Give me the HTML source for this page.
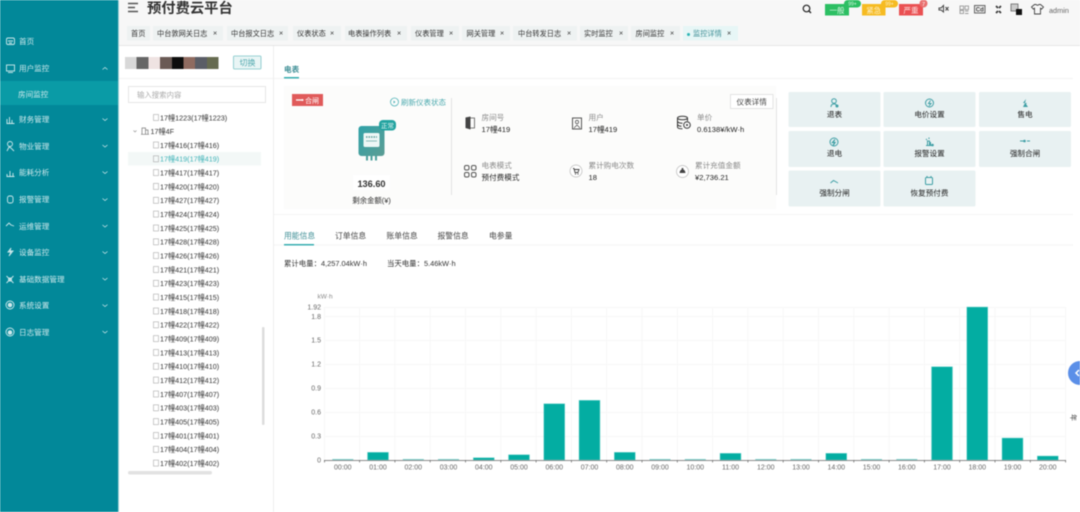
<!DOCTYPE html>
<html lang="zh-CN"><head><meta charset="utf-8"><title>预付费云平台</title>
<style>
html,body{margin:0;padding:0;width:1080px;height:512px;overflow:hidden;background:#fff}
svg{display:block;filter:blur(.4px)}
text{font-family:"Liberation Sans","Noto Sans CJK SC",sans-serif;font-size:7.2px;fill:#333}
.side text{fill:#cfe9ec;font-size:7.6px}
.tab{fill:#55757a;font-size:7.4px}
.x{fill:#889;font-size:6px}
.tree text{fill:#333;font-size:7.2px}
.tico{fill:none;stroke:#aaa;stroke-width:.6}
.lab{fill:#8a8a8a;font-size:7.6px}
.val{fill:#222;font-size:7.6px}
.act{fill:#222;font-size:7.6px;text-anchor:middle}
.axis text{fill:#666;font-size:7px;text-anchor:middle}
.yl text{fill:#666;font-size:7px;text-anchor:end}
.ic{fill:none;stroke:#444;stroke-width:1}
.tl{fill:none;stroke:#3f9fa5;stroke-width:1}
</style></head><body>
<svg width="1080" height="512" viewBox="0 0 1080 512" xmlns="http://www.w3.org/2000/svg">
<rect width="1080" height="512" fill="#fff"/>
<!-- sidebar -->
<rect width="118" height="512" fill="#028899"/>
<rect x="118" width="1" height="512" fill="#9fcfd5"/>
<rect y="81" width="118" height="24" fill="#0a9ba6"/>
<g class="side">
<text x="19" y="44">首页</text>
<text x="19" y="71">用户监控</text>
<text x="18" y="97">房间监控</text>
<text x="19" y="122">财务管理</text>
<text x="19" y="149">物业管理</text>
<text x="19" y="175">能耗分析</text>
<text x="19" y="202">报警管理</text>
<text x="19" y="229">运维管理</text>
<text x="19" y="255">设备监控</text>
<text x="19" y="282">基础数据管理</text>
<text x="19" y="308">系统设置</text>
<text x="19" y="335">日志管理</text>
</g>
<g fill="none" stroke="#cfe9ec" stroke-width=".9">
<rect x="6.5" y="38" width="8" height="6.5" rx="1.5"/><path d="M8 41h5M9 43h3"/>
<rect x="6.5" y="65" width="8" height="6"/><path d="M8 72.5h5"/>
<path d="M7 123v-4M9.500 123v-6M12 123v-3M6.500 123.500h8"/>
<circle cx="10" cy="144" r="2.500"/><path d="M7 151l2-4 2 1 3 3"/>
<path d="M7 176v-2M10 176v-5M13 176v-3M6.500 176.500h8"/>
<rect x="7.500" y="196" width="5.500" height="7" rx="2"/>
<path d="M6 226l3-3 2 2 3 1"/>
<path d="M11 248l-3 4h3l-2 4 4-5h-3z"/>
<path d="M6.500 276l7 7M13.500 276l-7 7"/><circle cx="10" cy="279.500" r="1.500"/>
<circle cx="10" cy="305" r="4"/><circle cx="10" cy="305" r="1.800" fill="#cfe9ec"/>
<circle cx="10" cy="332" r="4"/><circle cx="10" cy="332.500" r="1.800" fill="#cfe9ec"/>
<path d="M102.500 69.500l2.500-2 2.500 2M102.500 118.500l2.500 2 2.500-2M102.500 145l2.500 2 2.500-2M102.500 171.500l2.500 2 2.500-2M102.500 198.500l2.500 2 2.500-2M102.500 225l2.500 2 2.500-2M102.500 251.500l2.500 2 2.500-2M102.500 278l2.500 2 2.500-2M102.500 304.500l2.500 2 2.500-2M102.500 331l2.500 2 2.500-2" stroke-width=".7"/>
</g>
<!-- header -->
<rect x="119" width="961" height="45" fill="#f7f7f7"/>
<rect x="119" y="45" width="961" height="1" fill="#e6e6e6"/>
<path d="M128 3.500h10M128 7.500h7M128 11.500h10" stroke="#555" stroke-width="1.400" fill="none"/>
<text x="147" y="13" style="font-size:14.300px;font-weight:700;fill:#333">预付费云平台</text>
<circle cx="806.500" cy="8.500" r="3.300" fill="none" stroke="#222" stroke-width="1.200"/><path d="M809 11l2 2" stroke="#222" stroke-width="1.300"/>
<rect x="825" y="4" width="24" height="11.500" fill="#2cbf63"/><text x="837" y="13" text-anchor="middle" style="font-size:7.500px;fill:#d8f5e2">一般</text>
<rect x="844" y="0" width="17" height="7.500" rx="3.700" fill="#2cbf63"/><text x="852.500" y="5.500" text-anchor="middle" style="font-size:5px;fill:#d8f5e2">99+</text>
<rect x="862" y="4" width="23.500" height="11.500" fill="#f6bb22"/><text x="873.700" y="13" text-anchor="middle" style="font-size:7.500px;fill:#fdf0c8">紧急</text>
<rect x="881" y="0" width="17" height="7.500" rx="3.700" fill="#f6bb22"/><text x="889.500" y="5.500" text-anchor="middle" style="font-size:5px;fill:#fdf0c8">99+</text>
<rect x="899" y="4" width="24" height="11.500" fill="#ea5052"/><text x="911" y="13" text-anchor="middle" style="font-size:7.500px;fill:#fde0e0">严重</text>
<circle cx="923.500" cy="3.500" r="4" fill="#e9706f"/><text x="923.500" y="6" text-anchor="middle" style="font-size:5.500px;fill:#fff">7</text>
<path d="M939 8h2l2.500-2.500v6.500L941 10h-2zM945.500 7l3 3.500M948.500 7l-3 3.500" class="ic" stroke-width=".8"/>
<g fill="none" stroke="#999" stroke-width=".9"><rect x="960" y="6" width="3.500" height="3.500"/><rect x="965" y="6" width="3.500" height="3.500"/><rect x="960" y="10.500" width="3.500" height="3"/><path d="M965 11h3.500M965 13.500h3.500"/></g>
<rect x="974.500" y="5.500" width="10.500" height="7.500" fill="#eee" stroke="#555" stroke-width=".9"/><text x="975.800" y="11.600" style="font-size:6px;font-weight:700;fill:#444">Cd</text>
<path d="M996 6l2 2M1001 6l-2 2M996 13l2-2M1001 13l-2-2" stroke="#333" stroke-width="1.600"/>
<rect x="1011" y="4" width="7" height="7" fill="#ccc" stroke="#666" stroke-width=".8"/><rect x="1016" y="9" width="6" height="6" fill="#111"/>
<path d="M1031 7l3-2.500h1.500q1.500 1.500 3 0h1.500l3 2.500-1.800 2-1.200-.8v5.800h-6v-5.800l-1.200.8z" fill="none" stroke="#444" stroke-width=".9" transform="translate(.5 0)"/>
<text x="1049" y="13" style="font-size:7.300px;fill:#666">admin</text>
<!-- tabs -->
<g fill="#eef2f2">
<rect x="127" y="26" width="23" height="14.500"/><rect x="153" y="26" width="70" height="14.500"/><rect x="227" y="26" width="61" height="14.500"/><rect x="293" y="26" width="48" height="14.500"/><rect x="345" y="26" width="62" height="14.500"/><rect x="411" y="26" width="48" height="14.500"/><rect x="462" y="26" width="48" height="14.500"/><rect x="513" y="26" width="64" height="14.500"/><rect x="580" y="26" width="48" height="14.500"/><rect x="631" y="26" width="49" height="14.500"/></g>
<rect x="683" y="26" width="55" height="14.500" fill="#e7f6f6"/>
<g class="tab">
<text x="131" y="36">首页</text><text x="157" y="36">中台敦网关日志</text><text x="231" y="36">中台报文日志</text><text x="297" y="36">仪表状态</text><text x="348" y="36">电表操作列表</text><text x="415" y="36">仪表管理</text><text x="466.500" y="36">网关管理</text><text x="518" y="36">中台转发日志</text><text x="584" y="36">实时监控</text><text x="635.500" y="36">房间监控</text>
<text x="693" y="36" style="fill:#3f8f96">监控详情</text></g>
<circle cx="688.500" cy="34.500" r="1.500" fill="#2eb5b5"/>
<g class="x"><text x="213" y="35.500">×</text><text x="279" y="35.500">×</text><text x="330" y="35.500">×</text><text x="397" y="35.500">×</text><text x="449" y="35.500">×</text><text x="500" y="35.500">×</text><text x="567" y="35.500">×</text><text x="619" y="35.500">×</text><text x="670" y="35.500">×</text><text x="727" y="35.500">×</text></g>
<!-- tree panel -->
<rect x="273" y="46" width="1" height="466" fill="#eee"/>
<rect x="119" y="78" width="154" height="1" fill="#f3f3f3"/>
<rect x="125" y="57" width="11.500" height="12" fill="#d8d8d8"/><rect x="136.500" y="57" width="12" height="12" fill="#666"/><rect x="148.500" y="57" width="11.500" height="12" fill="#efe3e2"/><rect x="160" y="57" width="12" height="12" fill="#6a5a55"/><rect x="172" y="57" width="11.500" height="12" fill="#0d0d0d"/><rect x="183.500" y="57" width="11.500" height="12" fill="#8f6b60"/><rect x="195" y="57" width="12" height="12" fill="#5a5d66"/><rect x="207" y="57" width="11.500" height="12" fill="#666b50"/>
<rect x="233.500" y="56" width="27.500" height="13" rx="1" fill="#e9f5f5" stroke="#7cc5c8" stroke-width=".8"/><text x="247.500" y="65.500" text-anchor="middle" style="font-size:8px;fill:#4fa8ae">切换</text>
<rect x="128.500" y="86.500" width="137" height="16" fill="#fff" stroke="#e6e6e6"/><text x="137" y="97.300" style="font-size:7.400px;fill:#aaa">输入搜索内容</text>
<rect x="128" y="152" width="133" height="13.500" fill="#f3f8f7"/>
<path d="M133.500 130.500l1.500 1.500 1.500-1.500" fill="none" stroke="#888" stroke-width=".6"/>
<path d="M142 134v-6h3.500v6M145.500 130h2.500v4M141 134.300h8" fill="none" stroke="#777" stroke-width=".7"/>
<g class="tree">
<text x="160" y="120.500">17幢1223(17幢1223)</text>
<text x="150.500" y="134">17幢4F</text>
<text x="160" y="148">17幢416(17幢416)</text>
<text x="160" y="161.500" style="fill:#3fb3b8">17幢419(17幢419)</text>
<text x="160" y="175.500">17幢417(17幢417)</text>
<text x="160" y="189.300">17幢420(17幢420)</text>
<text x="160" y="203.200">17幢427(17幢427)</text>
<text x="160" y="217">17幢424(17幢424)</text>
<text x="160" y="230.800">17幢425(17幢425)</text>
<text x="160" y="244.700">17幢428(17幢428)</text>
<text x="160" y="258.500">17幢426(17幢426)</text>
<text x="160" y="272.300">17幢421(17幢421)</text>
<text x="160" y="286.200">17幢423(17幢423)</text>
<text x="160" y="300">17幢415(17幢415)</text>
<text x="160" y="313.800">17幢418(17幢418)</text>
<text x="160" y="327.700">17幢422(17幢422)</text>
<text x="160" y="341.500">17幢409(17幢409)</text>
<text x="160" y="355.300">17幢413(17幢413)</text>
<text x="160" y="369.200">17幢410(17幢410)</text>
<text x="160" y="383">17幢412(17幢412)</text>
<text x="160" y="396.800">17幢407(17幢407)</text>
<text x="160" y="410.700">17幢403(17幢403)</text>
<text x="160" y="424.500">17幢405(17幢405)</text>
<text x="160" y="438.300">17幢401(17幢401)</text>
<text x="160" y="452.200">17幢404(17幢404)</text>
<text x="160" y="466">17幢402(17幢402)</text>
</g>
<g class="tico">
<rect x="153.500" y="114.500" width="5" height="6"/><rect x="153.500" y="142" width="5" height="6"/><rect x="153.500" y="155.800" width="5" height="6"/><rect x="153.500" y="169.600" width="5" height="6"/><rect x="153.500" y="183.400" width="5" height="6"/><rect x="153.500" y="197.300" width="5" height="6"/><rect x="153.500" y="211.100" width="5" height="6"/><rect x="153.500" y="225" width="5" height="6"/><rect x="153.500" y="238.800" width="5" height="6"/><rect x="153.500" y="252.600" width="5" height="6"/><rect x="153.500" y="266.500" width="5" height="6"/><rect x="153.500" y="280.300" width="5" height="6"/><rect x="153.500" y="294.100" width="5" height="6"/><rect x="153.500" y="308" width="5" height="6"/><rect x="153.500" y="321.800" width="5" height="6"/><rect x="153.500" y="335.600" width="5" height="6"/><rect x="153.500" y="349.500" width="5" height="6"/><rect x="153.500" y="363.300" width="5" height="6"/><rect x="153.500" y="377.100" width="5" height="6"/><rect x="153.500" y="391" width="5" height="6"/><rect x="153.500" y="404.800" width="5" height="6"/><rect x="153.500" y="418.600" width="5" height="6"/><rect x="153.500" y="432.500" width="5" height="6"/><rect x="153.500" y="446.300" width="5" height="6"/><rect x="153.500" y="460.100" width="5" height="6"/></g>
<rect x="262" y="327" width="2.500" height="98" rx="1" fill="#ddd"/>
<rect x="128" y="471" width="84" height="3.500" rx="1.700" fill="#e2e2e2"/>
<!-- main top -->
<text x="284" y="72" style="font-size:7.600px;font-weight:700;fill:#3f8f96">电表</text>
<rect x="274" y="78" width="799" height="1" fill="#f3f3f3"/>
<rect x="284" y="77" width="15" height="1.500" fill="#37aeb0"/>
<rect x="284" y="86" width="492" height="123" fill="#fcfcfb"/>
<rect x="274" y="214" width="799" height="1" fill="#f5f5f5"/>
<rect x="292" y="94" width="31" height="12" fill="#e05a5a"/><path d="M296 100h6" stroke="#fff" stroke-width="1.300"/><circle cx="302.500" cy="100" r="1" fill="#fff"/><text x="305" y="103" style="font-size:7px;fill:#fff">合闸</text>
<circle cx="394.500" cy="102" r="4" fill="none" stroke="#4fb3b8" stroke-width=".8"/><path d="M393.500 100.500l2 1.500-2 1.500z" fill="#4fb3b8"/>
<text x="401" y="105" style="font-size:7.500px;fill:#4aa9ae">刷新仪表状态</text>
<rect x="451" y="98" width="1" height="97" fill="#e3e3e3"/>
<rect x="776" y="98" width="1" height="97" fill="#e3e3e3"/>
<defs><linearGradient id="m" x1="0" y1="0" x2="1" y2="1"><stop offset="0" stop-color="#2fa2a8"/><stop offset="1" stop-color="#5c9d94"/></linearGradient></defs>
<rect x="358.500" y="126" width="26" height="30" rx="3" fill="url(#m)"/>
<rect x="363.500" y="133" width="16" height="14" rx="1.500" fill="#eef7f6"/>
<path d="M366 137h11" stroke="#5c9d99" stroke-width="1.500" stroke-dasharray="1.500 1"/><path d="M366 141h11" stroke="#8bbcb8" stroke-width="1"/>
<path d="M367 156v4.500M371.500 156v4.500M376 156v4.500" stroke="#4ca09c" stroke-width="2"/>
<rect x="379" y="120" width="17" height="10.500" rx="4" fill="#22a3a0"/><text x="387.500" y="128" text-anchor="middle" style="font-size:6.500px;fill:#eaf7f6">正常</text>
<rect x="353" y="175" width="37" height="15" fill="#fff"/>
<text x="371.500" y="187" text-anchor="middle" style="font-size:9.200px;font-weight:700;fill:#333">136.60</text>
<text x="371.500" y="203" text-anchor="middle" style="font-size:7.400px;fill:#333">剩余金额(¥)</text>
<rect x="730.500" y="94.500" width="42.500" height="14" fill="#fff" stroke="#e4e4e4"/><text x="751.700" y="104.500" text-anchor="middle" style="font-size:7.600px;fill:#444">仪表详情</text>
<text class="lab" x="481.500" y="120">房间号</text><text class="val" x="481.500" y="132">17幢419</text>
<text class="lab" x="588.500" y="120">用户</text><text class="val" x="588.500" y="132">17幢419</text>
<text class="lab" x="697" y="120">单价</text><text class="val" x="697" y="132">0.6138¥/kW·h</text>
<text class="lab" x="481.500" y="168">电表模式</text><text class="val" x="481.500" y="180">预付费模式</text>
<text class="lab" x="588.500" y="168">累计购电次数</text><text class="val" x="588.500" y="180">18</text>
<text class="lab" x="695" y="168">累计充值金额</text><text class="val" x="695" y="180">¥2,736.21</text>
<path d="M465.500 117.500l5-1v13l-5-1.500z" fill="#444"/><path d="M470.500 118h4v10h-4" fill="none" stroke="#555" stroke-width=".8"/>
<rect x="572.500" y="118" width="9" height="11" fill="none" stroke="#444" stroke-width=".9"/><circle cx="577" cy="122" r="1.600" fill="none" stroke="#444" stroke-width=".7"/><path d="M574 128l3-3 3 3" fill="none" stroke="#444" stroke-width=".7"/>
<ellipse cx="682.500" cy="118" rx="5" ry="1.800" fill="none" stroke="#333"/><path d="M677.500 118v9q0 1.800 5 1.800M687.500 118v3M677.500 121.500q1 1.700 5 1.700M677.500 124.500q1 1.700 4 1.800" fill="none" stroke="#333"/><circle cx="687" cy="125" r="3.300" fill="#fff" stroke="#333"/><circle cx="687" cy="125" r="1" fill="#333"/>
<g fill="none" stroke="#555" stroke-width="1"><rect x="464.500" y="165.500" width="4.500" height="4.500" rx="1.500"/><rect x="471.500" y="165.500" width="4.500" height="4.500" rx="1.500"/><rect x="464.500" y="172.500" width="4.500" height="4.500" rx="1.500"/><rect x="471.500" y="172.500" width="4.500" height="4.500" rx="1.500"/></g>
<circle cx="576" cy="171" r="6" fill="#fff" stroke="#bbb" stroke-width=".7"/><path d="M573 168.500h1l1 4h3l1-3h-4.500" fill="none" stroke="#444" stroke-width=".9"/><circle cx="575.500" cy="174" r=".6" fill="#444"/><circle cx="578" cy="174" r=".6" fill="#444"/>
<circle cx="682.500" cy="171.500" r="6" fill="#fff" stroke="#bbb" stroke-width=".7"/><path d="M681.500 168h2l-.4 1.200q2.300 1.200 2.300 3.800h-5.800q0-2.600 2.300-3.800z" fill="#444"/>
<!-- actions -->
<g fill="#e8f1f2"><rect x="788.500" y="92" width="92" height="35" rx="1.500"/><rect x="883.500" y="92" width="92" height="35" rx="1.500"/><rect x="979" y="92" width="92" height="35" rx="1.500"/><rect x="788.500" y="131" width="92" height="36" rx="1.500"/><rect x="883.500" y="131" width="92" height="36" rx="1.500"/><rect x="979" y="131" width="92" height="36" rx="1.500"/><rect x="788.500" y="170.500" width="92" height="36" rx="1.500"/><rect x="883.500" y="170.500" width="92" height="36" rx="1.500"/></g>
<text class="act" x="834.500" y="117">退表</text><text class="act" x="929.500" y="117">电价设置</text><text class="act" x="1025" y="117">售电</text>
<text class="act" x="834.500" y="156">退电</text><text class="act" x="929.500" y="156">报警设置</text><text class="act" x="1025" y="156">强制合闸</text>
<text class="act" x="834.500" y="195.500">强制分闸</text><text class="act" x="929.500" y="195.500">恢复预付费</text>
<circle cx="834" cy="101" r="2.300" class="tl"/><path d="M831 107q0-3 3-3t2 2" class="tl"/><circle cx="837" cy="106" r="1.500" fill="#3f9fa5"/>
<circle cx="929.500" cy="103" r="4" class="tl"/><path d="M930.500 100.500l-2 3h2.500l-2 2.500" class="tl"/>
<path d="M1026 99l-3 4h2l-2 4h5l-2-3 1-1h-2z" fill="#3f9fa5"/>
<circle cx="834" cy="142" r="4" class="tl"/><path d="M835 139.500l-2.500 3h2.500l-2 3" stroke="#3f9fa5" fill="none" stroke-width="1.300"/>
<path d="M926 145.500h7M927.500 145v-4h2v4M930.500 145v-3M926 139l1 1M929 137.500v1.500" class="tl"/><circle cx="932.500" cy="145" r="1.300" fill="#3f9fa5"/>
<path d="M1020 141h4M1027 141h3" stroke="#3f9fa5" stroke-width="1"/><circle cx="1024.500" cy="141" r="1.300" fill="#3f9fa5"/>
<path d="M830.500 183l3-2.500 4.500 2.500" class="tl"/>
<rect x="925.500" y="177.500" width="7" height="7" rx="1" class="tl"/><path d="M927 176v1.500M931 176v1.500" class="tl"/>
<!-- sub tabs -->
<text x="284" y="238.500" style="font-size:7.800px;fill:#3f8f96">用能信息</text><text x="335" y="238.500" style="font-size:7.800px;fill:#444">订单信息</text><text x="386.500" y="238.500" style="font-size:7.800px;fill:#444">账单信息</text><text x="437.500" y="238.500" style="font-size:7.800px;fill:#444">报警信息</text><text x="489" y="238.500" style="font-size:7.800px;fill:#444">电参量</text>
<rect x="274" y="244.500" width="799" height="1" fill="#f3f3f3"/>
<rect x="284" y="244" width="30" height="1.500" fill="#37aeb0"/>
<text x="284" y="266" style="font-size:7.400px;fill:#333">累计电量：4,257.04kW·h</text>
<text x="387" y="266" style="font-size:7.400px;fill:#333">当天电量：5.46kW·h</text>
<!-- chart -->
<text x="317.500" y="298.500" style="font-size:6.500px;fill:#888">kW·h</text>
<path d="M324.500 307.500H1066M324.500 316.500H1066M324.500 340.500H1066M324.500 364.500H1066M324.500 388.500H1066M324.500 412.500H1066M324.500 436.500H1066" stroke="#f7f7f7" stroke-width="1" fill="none"/>
<path d="M324.500 307v153M359.600 307v153M394.900 307v153M430.200 307v153M465.500 307v153M500.800 307v153M536.100 307v153M571.400 307v153M606.700 307v153M642 307v153M677.300 307v153M712.600 307v153M747.900 307v153M783.200 307v153M818.500 307v153M853.800 307v153M889.100 307v153M924.400 307v153M959.700 307v153M995 307v153M1030.300 307v153M1065.600 307v153" stroke="#f7f7f7" stroke-width="1" fill="none"/>
<g class="yl"><text x="321" y="309.500">1.92</text><text x="321" y="319">1.8</text><text x="321" y="342.500">1.5</text><text x="321" y="366.500">1.2</text><text x="321" y="390.500">0.9</text><text x="321" y="414.500">0.6</text><text x="321" y="438.500">0.3</text><text x="321" y="462.500">0</text></g>
<g fill="#03ada2" stroke="#7fd8d2" stroke-width=".5">
<rect x="367.500" y="452.300" width="21" height="7.700"/><rect x="473.300" y="457.700" width="21" height="2.300"/><rect x="508.500" y="454.700" width="21" height="5.300"/><rect x="543.800" y="403.700" width="21" height="56.300"/><rect x="579" y="400.300" width="21" height="59.700"/><rect x="614.300" y="452.300" width="21" height="7.700"/><rect x="720" y="453.300" width="21" height="6.700"/><rect x="825.800" y="453.300" width="21" height="6.700"/><rect x="931.500" y="366.700" width="21" height="93.300"/><rect x="966.800" y="307" width="21" height="153"/><rect x="1002" y="438" width="21" height="22"/><rect x="1037.300" y="456" width="21" height="4"/>
</g>
<g fill="#7fd3cf">
<rect x="332.300" y="459" width="21" height="1"/><rect x="402.800" y="459" width="21" height="1"/><rect x="438" y="459" width="21" height="1"/><rect x="649.500" y="459" width="21" height="1"/><rect x="684.800" y="459" width="21" height="1"/><rect x="755.300" y="459" width="21" height="1"/><rect x="790.500" y="459" width="21" height="1"/><rect x="861" y="459" width="21" height="1"/><rect x="896.300" y="459" width="21" height="1"/>
</g>
<path d="M324 460.500H1066" stroke="#666" stroke-width=".8"/>
<path d="M324.500 460v2.500M359.600 460v2.500M394.900 460v2.500M430.200 460v2.500M465.500 460v2.500M500.800 460v2.500M536.100 460v2.500M571.400 460v2.500M606.700 460v2.500M642 460v2.500M677.300 460v2.500M712.600 460v2.500M747.900 460v2.500M783.200 460v2.500M818.500 460v2.500M853.800 460v2.500M889.100 460v2.500M924.400 460v2.500M959.700 460v2.500M995 460v2.500M1030.300 460v2.500M1065.600 460v2.500" stroke="#666" stroke-width=".7"/>
<g class="axis"><text x="342.800" y="469.500">00:00</text><text x="378" y="469.500">01:00</text><text x="413.300" y="469.500">02:00</text><text x="448.500" y="469.500">03:00</text><text x="483.800" y="469.500">04:00</text><text x="519" y="469.500">05:00</text><text x="554.300" y="469.500">06:00</text><text x="589.500" y="469.500">07:00</text><text x="624.800" y="469.500">08:00</text><text x="660" y="469.500">09:00</text><text x="695.300" y="469.500">10:00</text><text x="730.500" y="469.500">11:00</text><text x="765.800" y="469.500">12:00</text><text x="801" y="469.500">13:00</text><text x="836.300" y="469.500">14:00</text><text x="871.500" y="469.500">15:00</text><text x="906.800" y="469.500">16:00</text><text x="942" y="469.500">17:00</text><text x="977.300" y="469.500">18:00</text><text x="1012.500" y="469.500">19:00</text><text x="1047.800" y="469.500">20:00</text></g>
<!-- floating -->
<circle cx="1080" cy="373" r="12" fill="#5b8fe8"/>
<path d="M1079 370l-3 3 3 3" fill="none" stroke="#fff" stroke-width="1.500"/>
<text x="0" y="0" transform="translate(1071 414) rotate(90)" style="font-size:7px;fill:#333">年</text>
</svg>
</body></html>
